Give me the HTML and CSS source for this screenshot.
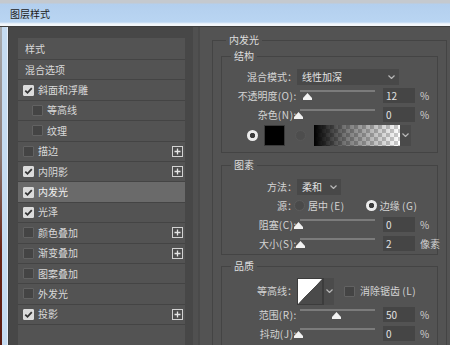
FILE: index.html
```html
<!DOCTYPE html>
<html lang="zh-CN">
<head>
<meta charset="utf-8">
<title>图层样式</title>
<link rel="stylesheet" href="styles.css">
</head>
<body>
<div class="window">
  <div class="titlebar"><span class="title">图层样式</span></div>
  <div class="main">
    <div class="frame-left"></div>
    <div class="sidebar">
      <ul class="style-list">
        <li class="item head">样式</li>
        <li class="item plain">混合选项</li>
        <li class="item"><span class="cb on"><svg viewBox="0 0 11 11"><path d="M2.3 5.6 L4.5 7.8 L8.8 3.2"/></svg></span>斜面和浮雕</li>
        <li class="item sub"><span class="cb"></span>等高线</li>
        <li class="item sub"><span class="cb"></span>纹理</li>
        <li class="item"><span class="cb"></span>描边<span class="plus"><svg viewBox="0 0 11 11"><path d="M5.5 2.5 V8.5 M2.5 5.5 H8.5"/></svg></span></li>
        <li class="item"><span class="cb on"><svg viewBox="0 0 11 11"><path d="M2.3 5.6 L4.5 7.8 L8.8 3.2"/></svg></span>内阴影<span class="plus"><svg viewBox="0 0 11 11"><path d="M5.5 2.5 V8.5 M2.5 5.5 H8.5"/></svg></span></li>
        <li class="item active"><span class="cb on"><svg viewBox="0 0 11 11"><path d="M2.3 5.6 L4.5 7.8 L8.8 3.2"/></svg></span>内发光</li>
        <li class="item"><span class="cb on"><svg viewBox="0 0 11 11"><path d="M2.3 5.6 L4.5 7.8 L8.8 3.2"/></svg></span>光泽</li>
        <li class="item"><span class="cb"></span>颜色叠加<span class="plus"><svg viewBox="0 0 11 11"><path d="M5.5 2.5 V8.5 M2.5 5.5 H8.5"/></svg></span></li>
        <li class="item"><span class="cb"></span>渐变叠加<span class="plus"><svg viewBox="0 0 11 11"><path d="M5.5 2.5 V8.5 M2.5 5.5 H8.5"/></svg></span></li>
        <li class="item"><span class="cb"></span>图案叠加</li>
        <li class="item"><span class="cb"></span>外发光</li>
        <li class="item"><span class="cb on"><svg viewBox="0 0 11 11"><path d="M2.3 5.6 L4.5 7.8 L8.8 3.2"/></svg></span>投影<span class="plus"><svg viewBox="0 0 11 11"><path d="M5.5 2.5 V8.5 M2.5 5.5 H8.5"/></svg></span></li>
      </ul>
    </div>
    <div class="splitter"></div>
    <div class="panel">
      <fieldset class="group outer">
        <legend>内发光</legend>

        <fieldset class="group inner s-struct">
          <legend>结构</legend>
          <div class="row">
            <span class="lbl">混合模式：</span>
            <div class="ctl">
              <div class="select w-blend"><span>线性加深</span><svg class="chev" viewBox="0 0 7 4"><polyline points="0.5,0.5 3.5,3.5 6.5,0.5"/></svg></div>
            </div>
          </div>
          <div class="row">
            <span class="lbl">不透明度<span class="k">(O):</span></span>
            <div class="ctl">
              <div class="slider"><div class="track"></div><svg class="thumb" style="left:5.6px" viewBox="0 0 9 7"><path d="M4.5 0 L9 5 L9 7 L0 7 L0 5 Z"/></svg></div>
              <span class="num">12</span><span class="unit">%</span>
            </div>
          </div>
          <div class="row">
            <span class="lbl">杂色<span class="k">(N):</span></span>
            <div class="ctl">
              <div class="slider"><div class="track"></div><svg class="thumb" style="left:-3.5px" viewBox="0 0 9 7"><path d="M4.5 0 L9 5 L9 7 L0 7 L0 5 Z"/></svg></div>
              <span class="num">0</span><span class="unit">%</span>
            </div>
          </div>
          <div class="swatch-row">
            <span class="radio on"></span>
            <span class="swatch-black"></span>
            <span class="radio dim"></span>
            <span class="swatch-grad"></span>
            <span class="grad-drop"><svg class="chev" viewBox="0 0 7 4"><polyline points="0.5,0.5 3.5,3.5 6.5,0.5"/></svg></span>
          </div>
        </fieldset>

        <fieldset class="group inner s-elem">
          <legend>图素</legend>
          <div class="row">
            <span class="lbl">方法：</span>
            <div class="ctl">
              <div class="select w-method"><span>柔和</span><svg class="chev" viewBox="0 0 7 4"><polyline points="0.5,0.5 3.5,3.5 6.5,0.5"/></svg></div>
            </div>
          </div>
          <div class="row">
            <span class="lbl">源：</span>
            <div class="ctl">
              <span class="radio src1"></span><span class="rtext">居中 <span class="k">(E)</span></span>
              <span class="radio on src2"></span><span class="rtext">边缘 <span class="k">(G)</span></span>
            </div>
          </div>
          <div class="row">
            <span class="lbl">阻塞<span class="k">(C):</span></span>
            <div class="ctl">
              <div class="slider"><div class="track"></div><svg class="thumb" style="left:-3.5px" viewBox="0 0 9 7"><path d="M4.5 0 L9 5 L9 7 L0 7 L0 5 Z"/></svg></div>
              <span class="num">0</span><span class="unit">%</span>
            </div>
          </div>
          <div class="row">
            <span class="lbl">大小<span class="k">(S):</span></span>
            <div class="ctl">
              <div class="slider"><div class="track"></div><svg class="thumb" style="left:-1.5px" viewBox="0 0 9 7"><path d="M4.5 0 L9 5 L9 7 L0 7 L0 5 Z"/></svg></div>
              <span class="num">2</span><span class="unit">像素</span>
            </div>
          </div>
        </fieldset>

        <fieldset class="group inner s-qual">
          <legend>品质</legend>
          <div class="row tall">
            <span class="lbl">等高线：</span>
            <div class="ctl">
              <span class="contour"></span>
              <span class="contour-drop"><svg class="chev" viewBox="0 0 7 4"><polyline points="0.5,0.5 3.5,3.5 6.5,0.5"/></svg></span>
              <span class="cb aa"></span><span class="aa-text">消除锯齿 <span class="k">(L)</span></span>
            </div>
          </div>
          <div class="row">
            <span class="lbl">范围<span class="k">(R):</span></span>
            <div class="ctl">
              <div class="slider"><div class="track"></div><svg class="thumb" style="left:34.5px" viewBox="0 0 9 7"><path d="M4.5 0 L9 5 L9 7 L0 7 L0 5 Z"/></svg></div>
              <span class="num">50</span><span class="unit">%</span>
            </div>
          </div>
          <div class="row">
            <span class="lbl">抖动<span class="k">(J):</span></span>
            <div class="ctl">
              <div class="slider"><div class="track"></div><svg class="thumb" style="left:-3.5px" viewBox="0 0 9 7"><path d="M4.5 0 L9 5 L9 7 L0 7 L0 5 Z"/></svg></div>
              <span class="num">0</span><span class="unit">%</span>
            </div>
          </div>
        </fieldset>
      </fieldset>
    </div>
  </div>
</div>
</body>
</html>
```

FILE: styles.css
```css
* { box-sizing: border-box; }
html, body { margin: 0; padding: 0; }
body {
  width: 450px;
  height: 345px;
  overflow: hidden;
  background: #535353;
  font-family: "Noto Sans CJK SC", "Noto Sans", sans-serif;
  font-size: 10px;
  line-height: 14px;
  color: #d6d6d6;
}
.window {
  width: 450px;
  height: 345px;
  display: flex;
  flex-direction: column;
  overflow: hidden;
}
.titlebar {
  height: 27px;
  flex: none;
  padding: 7px 0 0 10px;
  background: linear-gradient(to bottom,
    #c4c9cf 0, #c4c9cf 3px,
    #b3cfee 4px, #b9d5f2 22px,
    #d9e8f8 23px, #f3f7fb 24px, #f3f7fb 26px,
    #3e3e3e 26px);
}
.title { color: #1c1c1c; font-size: 10px; line-height: 14px; }
.main { flex: 1; display: flex; min-height: 0; }
.frame-left {
  width: 9px;
  flex: none;
  background:
    linear-gradient(to bottom, #a9adb2 0, #8c7a76 40%, #6a2518 70%, #5a1a10 100%) 0 0 / 2px 100% no-repeat,
    linear-gradient(to right, #c5dbf1 0, #c5dbf1 7px, #e6eef8 7px, #e6eef8 8px, #3d3d3d 8px);
}
.sidebar {
  width: 183px;
  flex: none;
  background: #474747;
  padding: 11px 7px 0 9px;
  display: flex;
  flex-direction: column;
}
.style-list {
  list-style: none;
  margin: 0;
  padding: 0;
  flex: 1;
  background: #535353;
}
.item {
  height: 20.4px;
  display: flex;
  align-items: center;
  border-bottom: 1px solid #444444;
  padding: 0 2px 0 5px;
  color: #d9d9d9;
  white-space: nowrap;
}
.item.head { height: 22px; padding-left: 7px; }
.item.plain { padding-left: 7px; }
.item.sub { padding-left: 14px; }
.item.active { background: #6a6a6a; color: #f2f2f2; }
.cb {
  width: 11px;
  height: 11px;
  flex: none;
  margin-right: 4px;
  background: #444444;
  border: 1px solid #626262;
  border-radius: 1px;
  display: inline-block;
}
.cb.on { background: #dcdcdc; border-color: #dcdcdc; }
.cb svg { display: block; width: 9px; height: 9px; }
.cb.on svg { width: 11px; height: 11px; margin: -1px; }
.cb svg path { fill: none; stroke: #333333; stroke-width: 1.8; }
.plus {
  margin-left: auto;
  width: 11px;
  height: 11px;
  border: 1px solid #d2d2d2;
  background: #4d4d4d;
  flex: none;
}
.plus svg { display: block; width: 11px; height: 11px; margin: -1px; }
.plus svg path { stroke: #e6e6e6; stroke-width: 1.3; fill: none; }

.splitter {
  width: 8px;
  flex: none;
  background: linear-gradient(to right, #474747 0, #474747 1px, #505050 1px, #505050 6px, #4a4a4a 6px);
}
.panel {
  flex: 1;
  min-width: 0;
  padding: 6px 3px 0 12px;
}
.group {
  margin: 0;
  min-width: 0;
  border: 1px solid #444444;
  padding: 0;
}
.group > legend {
  padding: 0 3px;
  margin-left: 9px;
  line-height: 14px;
  color: #dedede;
}
.outer {
  padding: 2px 8px 0 8px;
  border-bottom: none;
}
.outer > legend { margin-left: 5px; }
.s-struct { padding: 4px 0 6px 0; }
.s-elem { margin-top: 5px; padding: 5px 0 1px 0; }
.s-qual { margin-top: 4px; padding: 4px 0 6px 0; }

.row {
  display: grid;
  grid-template-columns: 75px auto;
  height: 19px;
  align-items: center;
}
.row.tall { height: 28px; }
.lbl { text-align: right; white-space: nowrap; color: #d4d4d4; }
.k { letter-spacing: 0.6px; }
.ctl { display: flex; align-items: center; height: 100%; white-space: nowrap; }

.select {
  height: 16px;
  background: #484848;
  display: flex;
  align-items: center;
  justify-content: space-between;
  padding: 0 4px 0 5px;
  color: #e2e2e2;
}
.w-blend { width: 102px; }
.w-method { width: 44px; }
.chev { width: 7px; height: 4px; display: block; }
.chev polyline { fill: none; stroke: #b8b8b8; stroke-width: 1.2; }

.slider { position: relative; width: 83px; height: 100%; flex: none; }
.track {
  margin: 4px 0 0 3px;
  width: 75px;
  height: 2px;
  background: #7b7b7b;
}
.thumb { position: absolute; top: 7px; width: 9px; height: 7px; display: block; }
.thumb path { fill: #f2f2f2; }
.num {
  width: 32px;
  height: 15px;
  margin-left: 3px;
  background: #454545;
  padding-left: 3px;
  line-height: 15px;
  color: #e2e2e2;
  flex: none;
}
.unit { margin-left: 5px; color: #d0d0d0; }

.radio {
  width: 11px;
  height: 11px;
  border-radius: 50%;
  background: #4a4a4a;
  border: 1px solid #5c5c5c;
  display: inline-block;
  flex: none;
}
.radio.on {
  border: none;
  background: radial-gradient(circle, #3c3c3c 0, #3c3c3c 2.4px, #ececec 3px);
}
.radio.dim { background: #4d4d4d; border-color: #585858; }

.swatch-row {
  height: 22px;
  display: flex;
  align-items: center;
  padding-left: 25px;
}
.swatch-black {
  width: 21px;
  height: 21px;
  margin-left: 6px;
  background: #000000;
  border: 1px solid #3a3a3a;
  flex: none;
}
.swatch-row .radio.dim { margin-left: 10px; }
.swatch-grad {
  width: 86px;
  height: 21px;
  margin-left: 8px;
  flex: none;
  background:
    linear-gradient(to right, #000 0, rgba(0,0,0,0.55) 35%, rgba(0,0,0,0) 100%),
    repeating-conic-gradient(#ffffff 0 25%, #cccccc 0 50%) 0 0 / 8px 8px;
}
.grad-drop {
  width: 11px;
  height: 21px;
  background: #4a4a4a;
  display: flex;
  align-items: center;
  justify-content: center;
  flex: none;
}

.src1 { margin-left: -3px; }
.rtext { margin-left: 3px; color: #d4d4d4; }
.src2 { margin-left: 21px; }

.contour {
  width: 26px;
  height: 27px;
  flex: none;
  border: 1px solid #3c3c3c;
  background: linear-gradient(to bottom right, #ffffff 0, #ffffff 49.5%, #4a4a4a 50.5%, #4a4a4a 100%);
}
.contour-drop {
  width: 11px;
  height: 27px;
  flex: none;
  background: #4b4b4b;
  border-left: 1px solid #3c3c3c;
  display: flex;
  align-items: center;
  justify-content: center;
}
.cb.aa { margin: 0 0 0 10px; }
.aa-text { margin-left: 5px; color: #d4d4d4; }
```
